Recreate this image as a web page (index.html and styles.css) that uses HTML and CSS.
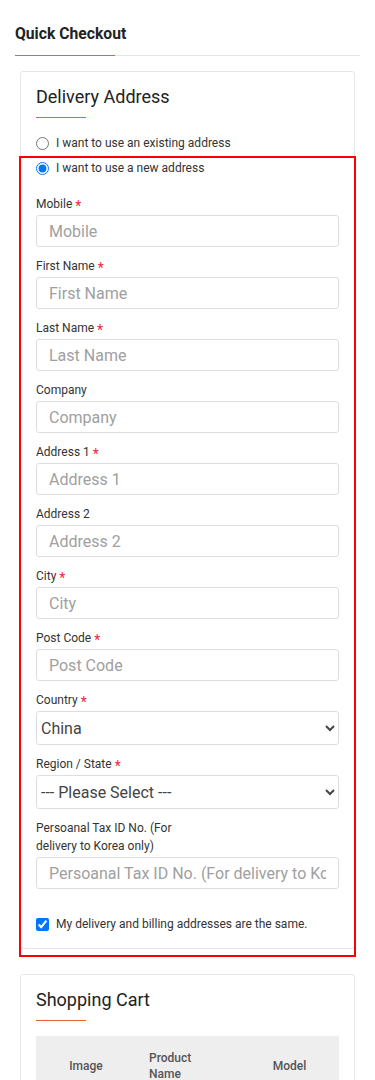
FILE: index.html
```html
<!DOCTYPE html>
<html lang="en">
<head>
<meta charset="utf-8">
<title>Quick Checkout</title>
<link rel="stylesheet" href="styles.css">
</head>
<body>
<div class="page">
  <h1 class="page-title">Quick Checkout</h1>

  <section class="card">
    <h2 class="card-title">Delivery Address</h2>
    <div class="radios">
      <label class="radio-row"><input type="radio" name="addr"> <span>I want to use an existing address</span></label>
      <label class="radio-row"><input type="radio" name="addr" checked> <span>I want to use a new address</span></label>
    </div>

    <div class="fields">
      <div class="field">
        <label class="field-label">Mobile <span class="req">*</span></label>
        <input class="control" type="text" placeholder="Mobile">
      </div>
      <div class="field">
        <label class="field-label">First Name <span class="req">*</span></label>
        <input class="control" type="text" placeholder="First Name">
      </div>
      <div class="field">
        <label class="field-label">Last Name <span class="req">*</span></label>
        <input class="control" type="text" placeholder="Last Name">
      </div>
      <div class="field">
        <label class="field-label">Company</label>
        <input class="control" type="text" placeholder="Company">
      </div>
      <div class="field">
        <label class="field-label">Address 1 <span class="req">*</span></label>
        <input class="control" type="text" placeholder="Address 1">
      </div>
      <div class="field">
        <label class="field-label">Address 2</label>
        <input class="control" type="text" placeholder="Address 2">
      </div>
      <div class="field">
        <label class="field-label">City <span class="req">*</span></label>
        <input class="control" type="text" placeholder="City">
      </div>
      <div class="field">
        <label class="field-label">Post Code <span class="req">*</span></label>
        <input class="control" type="text" placeholder="Post Code">
      </div>
      <div class="field">
        <label class="field-label">Country <span class="req">*</span></label>
        <select class="control select"><option>China</option></select>
      </div>
      <div class="field">
        <label class="field-label">Region / State <span class="req">*</span></label>
        <select class="control select"><option>--- Please Select ---</option></select>
      </div>
      <div class="field">
        <label class="field-label narrow">Persoanal Tax ID No. (For delivery to Korea only)</label>
        <input class="control" type="text" placeholder="Persoanal Tax ID No. (For delivery to Korea only)">
      </div>
    </div>

    <label class="check-row"><input type="checkbox" checked> <span>My delivery and billing addresses are the same.</span></label>
  </section>

  <section class="card">
    <h2 class="card-title">Shopping Cart</h2>
    <div class="cart-table">
      <div class="th th-image">Image</div>
      <div class="th th-name"><span>Product Name</span></div>
      <div class="th th-model">Model</div>
    </div>
  </section>

  <div class="highlight"></div>
</div>
</body>
</html>
```

FILE: styles.css
```css
* { box-sizing: border-box; }

html, body {
  margin: 0;
  padding: 0;
  background: #fff;
}

body {
  font-family: Roboto, "Liberation Sans", Arial, sans-serif;
  color: #333;
}

.page {
  position: relative;
  padding: 24px 15px 40px;
}

.page-title {
  position: relative;
  margin: 0;
  font-size: 15.7px;
  line-height: 20px;
  font-weight: 700;
  color: #222;
  padding-bottom: 11px;
  border-bottom: 1px solid #e5e5e5;
}

.page-title::after {
  content: "";
  position: absolute;
  left: 0;
  bottom: -1px;
  width: 100px;
  height: 1px;
  background: #e4662f;
}

.card {
  margin: 15px 5px 0;
  border: 1px solid #e6e6e6;
  border-radius: 3px;
  padding: 15px 15px 15px;
}

.card + .card {
  margin-top: 25px;
}

.card-title {
  margin: 0;
  font-size: 18px;
  line-height: 20px;
  font-weight: 400;
  color: #222;
}

.card-title::after {
  content: "";
  display: block;
  width: 50px;
  height: 1px;
  margin-top: 10px;
  background: #e4662f;
}

.radios {
  display: flex;
  flex-direction: column;
  gap: 7px;
  margin-top: 16px;
}

.radio-row,
.check-row {
  display: flex;
  align-items: center;
  gap: 7px;
  height: 18px;
  font-size: 12px;
  color: #333;
}

.radio-row input,
.check-row input {
  margin: 0;
  width: 13px;
  height: 13px;
}

.fields {
  display: flex;
  flex-direction: column;
  gap: 10px;
  margin-top: 18px;
}

.field {
  display: flex;
  flex-direction: column;
  gap: 2px;
}

.field-label {
  font-size: 12px;
  line-height: 18px;
  color: #333;
}

.field-label.narrow {
  width: 160px;
}

.req {
  color: #f0243a;
  font-size: 14px;
  vertical-align: -3px;
  line-height: 0;
}

.control {
  display: block;
  width: 100%;
  height: 32px;
  border: 1px solid #dedede;
  border-radius: 3px;
  padding: 0 12px;
  font-family: Roboto, "Liberation Sans", Arial, sans-serif;
  font-size: 16px;
  color: #444;
  background: #fff;
  outline: none;
}

.control::placeholder {
  color: #a0a0a0;
}

.select {
  height: 34px;
  padding: 0;
  color: #444;
}

.check-row {
  margin-top: 26px;
}

.cart-table {
  display: grid;
  grid-template-columns: 100px 104px 1fr;
  align-items: center;
  margin-top: 15px;
  background: #eee;
  padding: 12px 0;
  min-height: 60px;
}

.th {
  font-size: 12px;
  line-height: 16px;
  font-weight: 500;
  color: #555;
}

.th-image { text-align: center; }
.th-name { padding-left: 13px; }
.th-name span { display: block; width: 50px; }
.th-model { text-align: center; }

.highlight {
  position: absolute;
  left: 19px;
  top: 156px;
  width: 337px;
  height: 801px;
  border: 2px solid #ff0000;
  pointer-events: none;
}
```
